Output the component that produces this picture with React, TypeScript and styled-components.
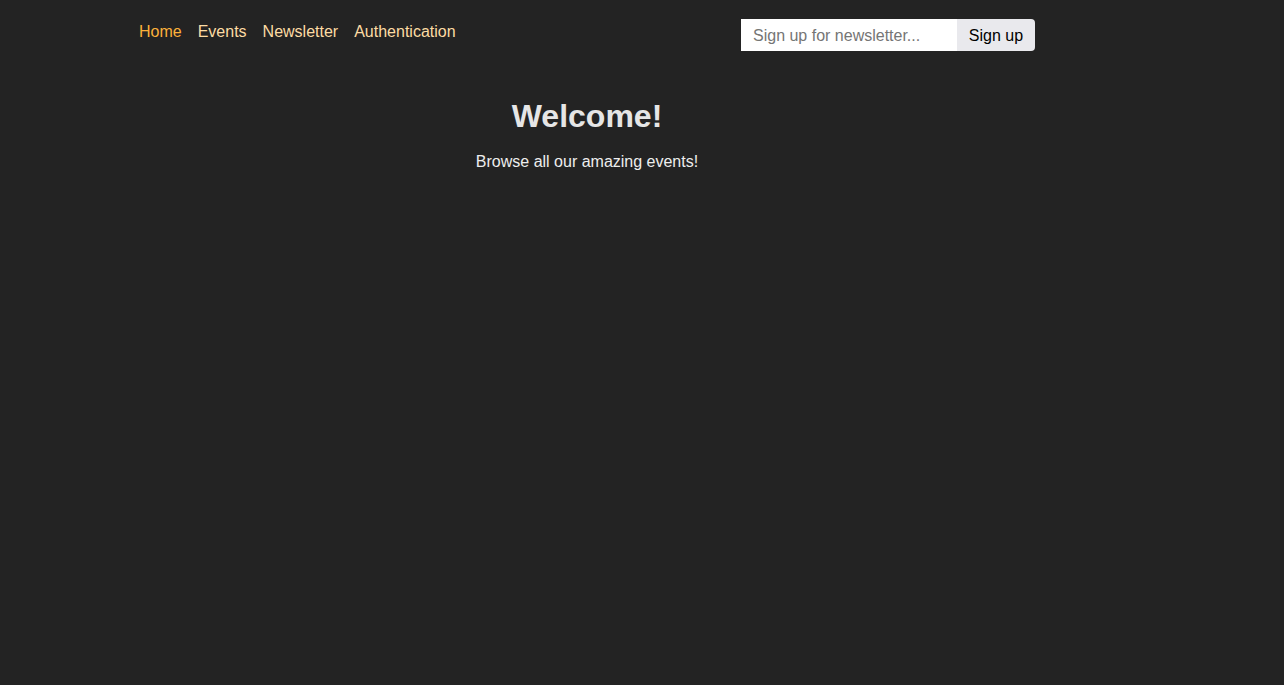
import React from "react"
import styled, {createGlobalStyle} from "styled-components"

const GlobalStyle = createGlobalStyle`
  html, body {
    margin: 0;
    padding: 0;
    background-color: #232323;
    font-family: "Liberation Sans", Arial, sans-serif;
  }
`

const Page = styled.div`
  width: 1174px;
  min-height: 685px;
`

const Header = styled.header`
  max-width: 896px;
  margin: 0 auto;
  padding-top: 19px;
  display: flex;
  justify-content: space-between;
  align-items: flex-start;
`

const NavList = styled.ul`
  list-style: none;
  margin: 0;
  padding: 4px 0 0;
  display: flex;
  gap: 16px;
`

const NavLink = styled.a<{ $active?: boolean }>`
  font-size: 16px;
  text-decoration: none;
  color: ${p => (p.$active ? "#fcb13b" : "#fddca4")};
`

const SignupForm = styled.form`
  display: flex;
`

const EmailInput = styled.input`
  width: 216px;
  height: 32px;
  box-sizing: border-box;
  border: none;
  outline: none;
  padding: 2px 12px 0;
  font: 16px "Liberation Sans", Arial, sans-serif;
  background: #ffffff;
  color: #222;
  &::placeholder {
    color: #757575;
  }
`

const SignupButton = styled.button`
  width: 78px;
  height: 32px;
  border: none;
  border-radius: 0 4px 4px 0;
  padding: 2px 0 0;
  background: #e9e9ed;
  color: #000;
  font: 16px "Liberation Sans", Arial, sans-serif;
  cursor: pointer;
`

const Main = styled.main`
  text-align: center;
  color: #eeeeee;
`

const Title = styled.h1`
  margin: 47px 0 0;
  font-size: 32px;
  font-weight: bold;
  color: #e6e6e6;
`

const Lead = styled.p`
  margin: 18px 0 0;
  font-size: 16px;
`

const navItems = ["Home", "Events", "Newsletter", "Authentication"]

export default function App() {
  return (
    <Page>
      <GlobalStyle/>
      <Header>
        <nav>
          <NavList>
            {navItems.map((item, i) => (
              <li key={item}>
                <NavLink href="#" $active={i === 0}>{item}</NavLink>
              </li>
            ))}
          </NavList>
        </nav>
        <SignupForm onSubmit={e => e.preventDefault()}>
          <EmailInput type="email" placeholder="Sign up for newsletter..."/>
          <SignupButton type="submit">Sign up</SignupButton>
        </SignupForm>
      </Header>
      <Main>
        <Title>Welcome!</Title>
        <Lead>Browse all our amazing events!</Lead>
      </Main>
    </Page>
  )
}
